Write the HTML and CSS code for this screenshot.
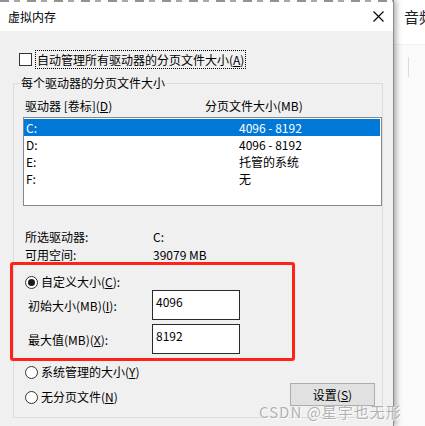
FILE: index.html
```html
<!DOCTYPE html>
<html lang="zh-CN">
<head>
    <meta charset="UTF-8">
    <title>虚拟内存</title>
    <link rel="stylesheet" href="styles.css">
</head>
<body>
    <div class="dialog">
        <div class="peek"></div>
        <div class="titlebar">
            <span class="title">虚拟内存</span>
            <svg class="close" width="11" height="11" viewBox="0 0 11 11">
                <path d="M0.5 0.5 L10.5 10.5 M10.5 0.5 L0.5 10.5" stroke="#000" stroke-width="1.1" fill="none"/>
            </svg>
        </div>

        <div class="content">
            <div class="autorow">
                <span class="checkbox"></span>
                <span class="focus">自动管理所有驱动器的分页文件大小(<u>A</u>)</span>
            </div>

            <fieldset class="group">
                <legend>每个驱动器的分页文件大小</legend>
                <div class="inner">
                    <div class="cols">
                        <span class="col1">驱动器 [卷标](<u>D</u>)</span>
                        <span>分页文件大小(MB)</span>
                    </div>

                    <div class="listbox">
                        <div class="row selected"><span class="drive">C:</span><span>4096 - 8192</span></div>
                        <div class="row"><span class="drive">D:</span><span>4096 - 8192</span></div>
                        <div class="row"><span class="drive">E:</span><span>托管的系统</span></div>
                        <div class="row"><span class="drive">F:</span><span>无</span></div>
                    </div>

                    <div class="info">
                        <div class="inforow"><span class="ilabel">所选驱动器:</span><span>C:</span></div>
                        <div class="inforow"><span class="ilabel">可用空间:</span><span>39079 MB</span></div>
                    </div>

                    <div class="radio first"><span class="dot on"></span>自定义大小(<u>C</u>):</div>

                    <div class="sizerow">
                        <span class="slabel">初始大小(MB)(<u>I</u>):</span>
                        <span class="field">4096</span>
                    </div>
                    <div class="sizerow second">
                        <span class="slabel">最大值(MB)(<u>X</u>):</span>
                        <span class="field">8192</span>
                    </div>

                    <div class="bottom">
                        <div class="radios">
                            <div class="radio"><span class="dot"></span>系统管理的大小(<u>Y</u>)</div>
                            <div class="radio third"><span class="dot"></span>无分页文件(<u>N</u>)</div>
                        </div>
                        <span class="button">设置(<u>S</u>)</span>
                    </div>
                </div>
            </fieldset>
        </div>
    </div>

    <div class="side">
        <div class="side-top">音频</div>
        <div class="side-bottom">
            <div class="vline"></div>
        </div>
    </div>

    <div class="highlight"></div>
    <div class="watermark">CSDN @星宇也无形</div>
</body>
</html>
```

FILE: styles.css
```css
body {
    margin: 0;
    width: 425px;
    height: 426px;
    overflow: hidden;
    display: flex;
    position: relative;
    font-family: "Noto Sans CJK SC", "Noto Sans", sans-serif;
    font-size: 12px;
    color: #000;
    background: #fff;
}

u {
    text-decoration: underline;
    text-underline-offset: 1px;
}

.dialog {
    width: 393px;
    flex: none;
    border-right: 1px solid #8c8c8c;
    background: #f0f0f0;
    position: relative;
    z-index: 1;
    box-shadow: 2px 0 6px rgba(0, 0, 0, 0.35);
}

.peek {
    height: 2px;
    background: repeating-linear-gradient(90deg, #6a6a6a 0 9px, #fff 9px 14px, #8a8a8a 14px 20px, #fff 20px 27px);
    opacity: 0.7;
}

.titlebar {
    height: 29px;
    background: #fff;
    display: flex;
    align-items: center;
    justify-content: space-between;
    padding: 0 9px 0 8px;
}

.title {
    font-size: 12px;
    line-height: 16px;
}

.content {
    padding: 19px 0 0 13px;
}

.autorow {
    display: flex;
    align-items: center;
    height: 19px;
    margin-left: 6px;
}

.checkbox {
    width: 11px;
    height: 11px;
    border: 1px solid #333;
    background: #fff;
}

.focus {
    margin-left: 3px;
    height: 17px;
    line-height: 17px;
    padding: 0 1px;
    border: 1px dotted #000;
}

.group {
    margin: 6px 0 0;
    padding: 0 0 12px;
    width: 366px;
    border: 1px solid #dcdcdc;
}

.group legend {
    margin-left: 6px;
    padding: 0 1px;
    line-height: 16px;
}

.inner {
    padding-left: 11px;
}

.cols {
    display: flex;
    margin-top: 7px;
    line-height: 16px;
}

.col1 {
    width: 180px;
}

.listbox {
    margin: 3px 0 0 -2px;
    width: 359px;
    height: 89px;
    box-sizing: border-box;
    border: 1px solid #828790;
    background: #fff;
    padding: 1px 1px 0 0;
}

.row {
    display: flex;
    height: 17px;
    line-height: 17px;
    padding-left: 2px;
}

.row.selected {
    background: #0078d7;
    color: #fff;
}

.drive {
    width: 213px;
}

.info {
    margin-top: 22px;
}

.inforow {
    display: flex;
    line-height: 18px;
}

.ilabel {
    width: 128px;
}

.radio {
    display: flex;
    align-items: center;
    height: 16px;
    line-height: 16px;
}

.radio.first {
    margin-top: 10px;
}

.radio.third {
    margin-top: 9px;
}

.dot {
    width: 11px;
    height: 11px;
    border: 1px solid #333;
    border-radius: 50%;
    background: #fff;
    margin-right: 3px;
    display: flex;
    align-items: center;
    justify-content: center;
}

.dot.on::after {
    content: "";
    width: 7px;
    height: 7px;
    border-radius: 50%;
    background: #1a1a1a;
}

.sizerow {
    display: flex;
    align-items: center;
}

.sizerow.second {
    margin-top: 4px;
}

.slabel {
    width: 124px;
    margin-left: 3px;
}

.field {
    width: 86px;
    height: 28px;
    border: 1px solid #2b2b2b;
    background: #fff;
    box-sizing: content-box;
    padding: 0;
    text-indent: 3px;
    line-height: 22px;
}

.bottom {
    display: flex;
    margin-top: 10px;
}

.button {
    margin: 0 7px -1px auto;
    align-self: flex-end;
    width: 83px;
    height: 21px;
    line-height: 21px;
    text-align: center;
    background: #e1e1e1;
    border: 1px solid #adadad;
}

.side {
    flex: 1;
    display: flex;
    flex-direction: column;
    background: #fafafa;
}

.side-top {
    height: 44px;
    background: #fff;
    padding-left: 10px;
    font-size: 15px;
    line-height: 33px;
    white-space: nowrap;
    overflow: hidden;
    color: #222;
}

.side-bottom {
    flex: 1;
    border-top: 1px solid #f0f0f0;
}

.vline {
    margin: 12px 0 0 14px;
    width: 1px;
    height: 20px;
    background: #dcdcdc;
}

.highlight {
    position: absolute;
    left: 10px;
    top: 262px;
    width: 279px;
    height: 93px;
    border: 3px solid #ff2218;
    border-radius: 3px;
    z-index: 2;
}

.watermark {
    position: absolute;
    left: 259px;
    top: 402px;
    font-size: 15px;
    line-height: 20px;
    color: rgba(110, 110, 110, 0.55);
    text-shadow: 0 0 1px #fff, 1px 1px 0 rgba(255, 255, 255, 0.8);
    z-index: 3;
    white-space: nowrap;
    letter-spacing: 1px;
}
```
